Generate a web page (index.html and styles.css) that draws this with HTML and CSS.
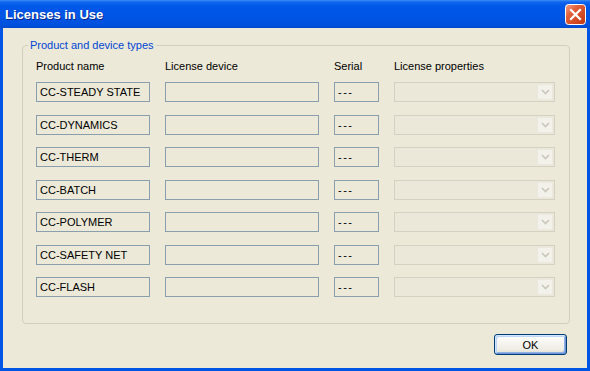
FILE: index.html
```html
<!DOCTYPE html>
<html>
<head>
<meta charset="utf-8">
<link rel="stylesheet" href="styles.css">
</head>
<body>
<div class="window">
  <div class="titlebar">
    <span class="title">Licenses in Use</span>
    <span class="close">
      <svg width="21" height="21" viewBox="0 0 21 21">
        <defs>
          <linearGradient id="cg" x1="0" y1="0" x2="1" y2="1">
            <stop offset="0" stop-color="#f2a38a"/>
            <stop offset="0.35" stop-color="#e2603a"/>
            <stop offset="1" stop-color="#c0350d"/>
          </linearGradient>
        </defs>
        <rect x="0.5" y="0.5" width="20" height="20" rx="3" fill="url(#cg)" stroke="#ffffff"/>
        <path d="M6 6 L15 15 M15 6 L6 15" stroke="#ffffff" stroke-width="2.2" stroke-linecap="square"/>
      </svg>
    </span>
  </div>
  <div class="client">
    <fieldset class="group">
      <legend class="legend">Product and device types</legend>
      <div class="grid">
        <div class="hdr">Product name</div>
        <div class="hdr">License device</div>
        <div class="hdr">Serial</div>
        <div class="hdr">License properties</div>

        <div class="box">CC-STEADY STATE</div>
        <div class="box"></div>
        <div class="box serial">---</div>
        <div class="combo"><span class="drop"><svg width="9" height="6" viewBox="0 0 9 6"><path d="M1 1 L4.5 4.5 L8 1" fill="none" stroke="#c9c7ba" stroke-width="1.6"/></svg></span></div>

        <div class="box">CC-DYNAMICS</div>
        <div class="box"></div>
        <div class="box serial">---</div>
        <div class="combo"><span class="drop"><svg width="9" height="6" viewBox="0 0 9 6"><path d="M1 1 L4.5 4.5 L8 1" fill="none" stroke="#c9c7ba" stroke-width="1.6"/></svg></span></div>

        <div class="box">CC-THERM</div>
        <div class="box"></div>
        <div class="box serial">---</div>
        <div class="combo"><span class="drop"><svg width="9" height="6" viewBox="0 0 9 6"><path d="M1 1 L4.5 4.5 L8 1" fill="none" stroke="#c9c7ba" stroke-width="1.6"/></svg></span></div>

        <div class="box">CC-BATCH</div>
        <div class="box"></div>
        <div class="box serial">---</div>
        <div class="combo"><span class="drop"><svg width="9" height="6" viewBox="0 0 9 6"><path d="M1 1 L4.5 4.5 L8 1" fill="none" stroke="#c9c7ba" stroke-width="1.6"/></svg></span></div>

        <div class="box">CC-POLYMER</div>
        <div class="box"></div>
        <div class="box serial">---</div>
        <div class="combo"><span class="drop"><svg width="9" height="6" viewBox="0 0 9 6"><path d="M1 1 L4.5 4.5 L8 1" fill="none" stroke="#c9c7ba" stroke-width="1.6"/></svg></span></div>

        <div class="box">CC-SAFETY NET</div>
        <div class="box"></div>
        <div class="box serial">---</div>
        <div class="combo"><span class="drop"><svg width="9" height="6" viewBox="0 0 9 6"><path d="M1 1 L4.5 4.5 L8 1" fill="none" stroke="#c9c7ba" stroke-width="1.6"/></svg></span></div>

        <div class="box">CC-FLASH</div>
        <div class="box"></div>
        <div class="box serial">---</div>
        <div class="combo"><span class="drop"><svg width="9" height="6" viewBox="0 0 9 6"><path d="M1 1 L4.5 4.5 L8 1" fill="none" stroke="#c9c7ba" stroke-width="1.6"/></svg></span></div>
      </div>
    </fieldset>
    <div class="actions">
      <button class="ok">OK</button>
    </div>
  </div>
</div>
</body>
</html>
```

FILE: styles.css
```css
html, body {
  margin: 0;
  padding: 0;
}
body {
  width: 590px;
  height: 371px;
  overflow: hidden;
  font-family: "Liberation Sans", Arial, sans-serif;
  font-size: 11px;
  color: #000;
}
.window {
  width: 590px;
  height: 371px;
  display: flex;
  flex-direction: column;
  background: #0055e5;
  box-sizing: border-box;
}
.titlebar {
  height: 28px;
  flex: none;
  display: flex;
  align-items: center;
  justify-content: space-between;
  padding: 0 4px 0 5px;
  background: linear-gradient(#3d8ff5 0, #1266ee 2px, #0058e8 6px, #0055e5 60%, #0050dc 90%, #0049cf 100%);
}
.title {
  color: #fff;
  font-weight: bold;
  font-size: 13px;
  text-shadow: 1px 1px 0 #0a2a8a;
  margin-top: 1px;
}
.close {
  display: flex;
  width: 21px;
  height: 21px;
}
.client {
  flex: 1;
  margin: 0 3px 3px 3px;
  background: #ece9d8;
  padding: 10px 17px 0 19px;
  display: flex;
  flex-direction: column;
}
.group {
  margin: 0;
  padding: 0 0 26px 13px;
  border: 1px solid #d0d0bf;
  border-radius: 4px;
  min-width: 0;
}
.legend {
  color: #0046d5;
  padding: 0 2px;
  margin-left: -8px;
  line-height: 14px;
  font-size: 11px;
}
.grid {
  display: grid;
  grid-template-columns: 114px 154px 45px 161px;
  column-gap: 15px;
  grid-template-rows: 9.5px repeat(7, 20px);
  row-gap: 12.5px;
  padding-top: 8px;
}
.hdr {
  line-height: 13px;
  height: 9.5px;
  white-space: nowrap;
}
.box {
  box-sizing: border-box;
  height: 20px;
  border: 1px solid #8a9fae;
  padding-left: 3px;
  line-height: 18px;
  white-space: nowrap;
  overflow: hidden;
}
.serial {
  letter-spacing: 1.5px;
}
.combo {
  box-sizing: border-box;
  height: 20px;
  border: 1px solid #d4d1c3;
  background: #ebe8d9;
  display: flex;
  justify-content: flex-end;
  padding: 1px;
}
.drop {
  width: 16px;
  height: 16px;
  background: #f3f2ea;
  border: 1px solid #ebe9df;
  box-sizing: border-box;
  display: flex;
  align-items: center;
  justify-content: center;
}
.actions {
  display: flex;
  justify-content: flex-end;
  margin-top: 10px;
  margin-right: 3px;
}
.ok {
  width: 73px;
  height: 21px;
  box-sizing: border-box;
  border: 1px solid #003c74;
  border-radius: 3px;
  background: linear-gradient(#ffffff 0, #f6f5f0 40%, #ecebe4 80%, #dcd8cc 100%);
  box-shadow: inset 1px 1px 0 #cee7ff, inset -1px -1px 0 #6d94d5, inset 2px 2px 0 #bcd4f6, inset -2px -2px 0 #8fb0e6;
  font-family: "Liberation Sans", Arial, sans-serif;
  font-size: 11px;
  color: #000;
  padding: 0;
}
```
